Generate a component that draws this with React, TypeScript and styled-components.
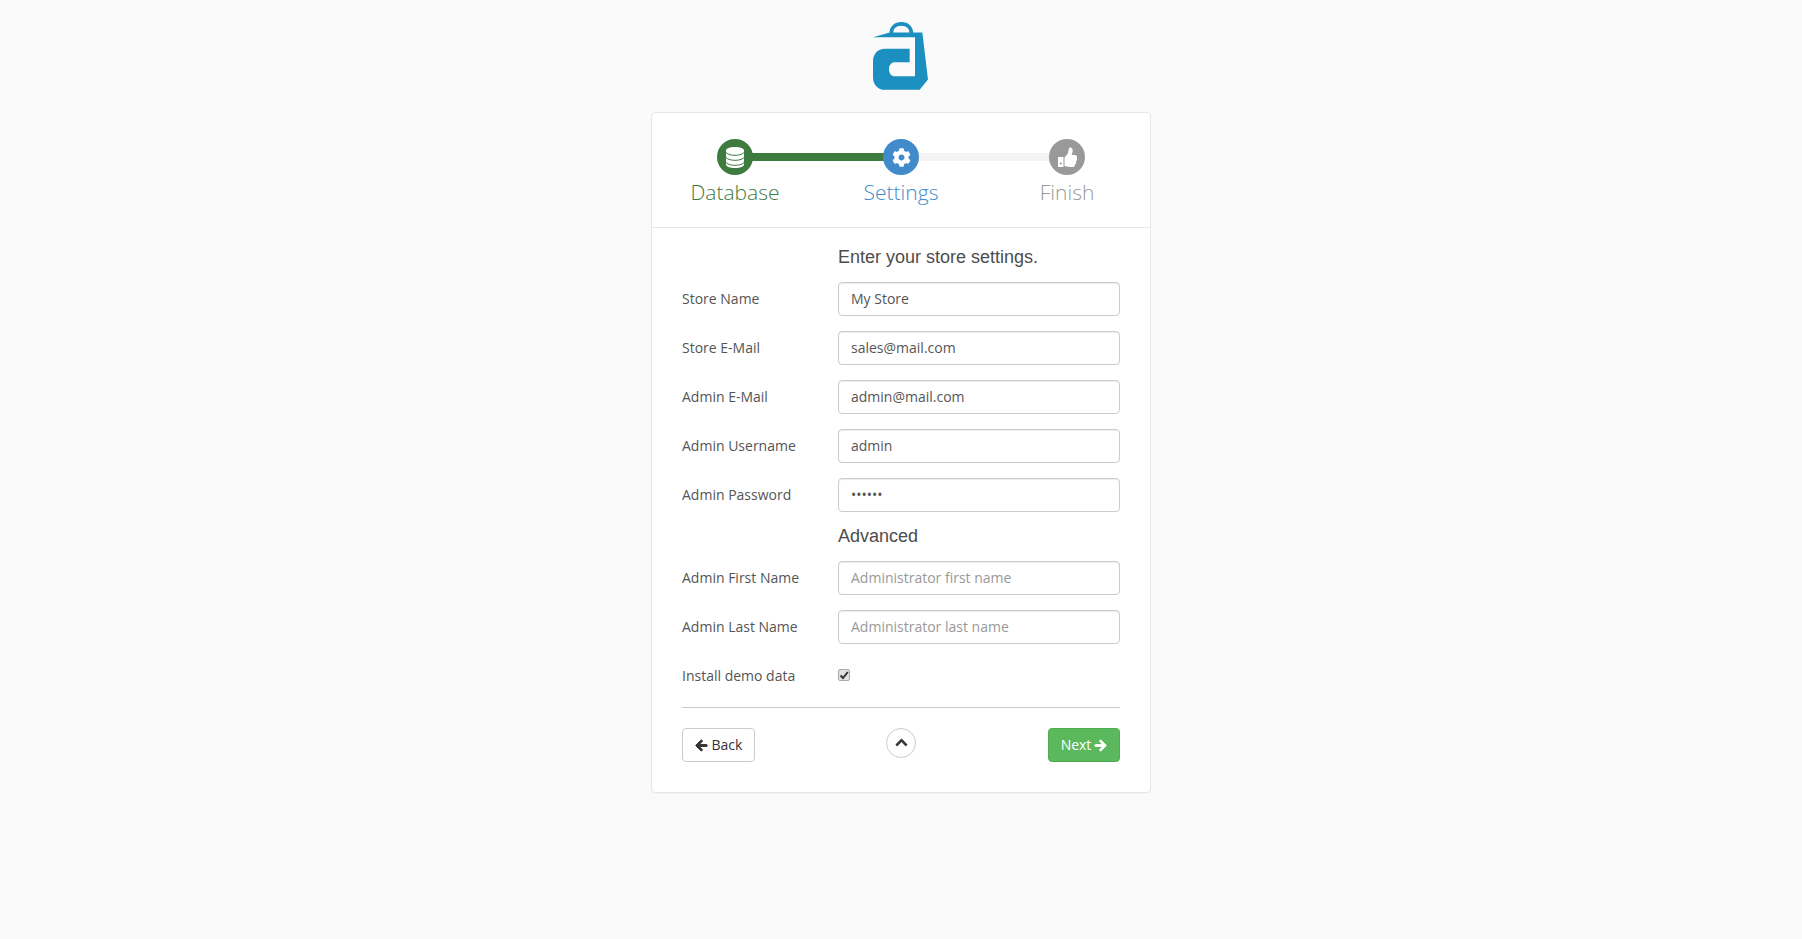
import React from "react";
import styled, { createGlobalStyle } from "styled-components";
import { FaCog, FaArrowLeft, FaArrowRight, FaChevronUp } from "react-icons/fa";

const Global = createGlobalStyle`
  html, body { margin: 0; padding: 0; }
  body {
    background: #fafafa;
    font-family: "Open Sans", "Liberation Sans", sans-serif;
    font-size: 14px;
    line-height: 20px;
    color: #555;
  }
  * { box-sizing: border-box; }
`;

const Page = styled.div`
  display: flex;
  flex-direction: column;
  align-items: center;
  padding-top: 22px;
  min-height: 939px;
`;
const Logo = styled.svg`
  display: block;
  width: 55px;
  height: 68px;
  margin: 0 1px 22px 0;
`;
const Card = styled.main`
  width: 500px;
  background: #fff;
  border: 1px solid #e7e7e7;
  border-radius: 4px;
  box-shadow: 0 1px 1px rgba(0, 0, 0, 0.03);
`;
const Steps = styled.div`
  display: grid;
  grid-template-columns: repeat(3, 1fr);
  height: 115px;
  padding-top: 26px;
  border-bottom: 1px solid #e7e7e7;
`;
const Step = styled.div<{ $color: string; $bar?: string }>`
  position: relative;
  display: flex;
  flex-direction: column;
  align-items: center;
  color: ${(p) => p.$color};
  &::after {
    content: ${(p) => (p.$bar ? '""' : "none")};
    position: absolute;
    top: 14px;
    left: 50%;
    width: 100%;
    height: 8px;
    background: ${(p) => p.$bar};
  }
`;
const Circle = styled.div<{ $bg: string; $icon: number }>`
  position: relative;
  z-index: 1;
  display: flex;
  align-items: center;
  justify-content: center;
  width: 36px;
  height: 36px;
  border-radius: 50%;
  background: ${(p) => p.$bg};
  color: #fff;
  font-size: ${(p) => p.$icon}px;
`;
const DbIcon = styled.svg`
  display: block;
  width: 18px;
  height: 21px;
`;
const ThumbIcon = styled.svg`
  display: block;
  width: 19px;
  height: 20px;
`;
const StepLabel = styled.div`
  margin-top: 3px;
  font-size: 21px;
  line-height: 29px;
  font-weight: 300;
`;
const Form = styled.form`
  padding: 19px 30px 30px;
`;
const Row = styled.div`
  display: grid;
  grid-template-columns: 156px 282px;
  align-items: center;
  min-height: 34px;
  margin-bottom: 15px;
`;
const Heading = styled.h4<{ $before?: number; $after: number }>`
  margin: ${(p) => p.$before ?? 0}px 0 ${(p) => p.$after}px 156px;
  font-family: "Liberation Sans", Arial, sans-serif;
  font-size: 18px;
  line-height: 20px;
  font-weight: 400;
  color: #4d4d4d;
`;
const Label = styled.label`
  color: #555;
`;
const Input = styled.input`
  width: 282px;
  height: 34px;
  padding: 5px 12px 7px;
  font: inherit;
  color: #555;
  background: #fff;
  border: 1px solid #ccc;
  border-radius: 4px;
  box-shadow: inset 0 1px 1px rgba(0, 0, 0, 0.075);
  &::placeholder { color: #999; opacity: 1; }
`;
const Check = styled.input`
  appearance: none;
  display: block;
  width: 12px;
  height: 12px;
  margin: 0 0 2px;
  border: 1px solid #aaa;
  border-radius: 2px;
  background: #e0e0e0 url("data:image/svg+xml,%3Csvg xmlns='http://www.w3.org/2000/svg' viewBox='0 0 10 10'%3E%3Cpath d='M1.5 5.5 4 8l4.8-6' fill='none' stroke='%23333' stroke-width='2'/%3E%3C/svg%3E") center / 10px 10px no-repeat;
`;
const CheckRow = styled(Row)`
  height: 34px;
  margin-bottom: 14px;
`;
const Rule = styled.hr`
  margin: 0 0 20px;
  border: 0;
  height: 1px;
  background: #ccc;
`;
const Footer = styled.div`
  display: grid;
  grid-template-columns: 1fr auto 1fr;
  align-items: start;
`;
const Button = styled.button<{ $primary?: boolean; $width: number }>`
  display: inline-flex;
  align-items: center;
  justify-content: center;
  gap: ${(p) => (p.$primary ? 3 : 4)}px;
  width: ${(p) => p.$width}px;
  height: 34px;
  padding: 0;
  font: inherit;
  color: ${(p) => (p.$primary ? "#fff" : "#333")};
  background: ${(p) => (p.$primary ? "#5cb85c" : "#fff")};
  border: 1px solid ${(p) => (p.$primary ? "#4cae4c" : "#ccc")};
  border-radius: 4px;
  justify-self: ${(p) => (p.$primary ? "end" : "start")};
  svg {
    font-size: 13px;
    stroke: currentColor;
    stroke-width: 36;
  }
`;
const Round = styled.button`
  display: flex;
  align-items: center;
  justify-content: center;
  width: 30px;
  height: 30px;
  padding: 0 0 2px;
  color: #333;
  background: #fff;
  border: 1px solid #ccc;
  border-radius: 50%;
  font-size: 13px;
  svg {
    stroke: currentColor;
    stroke-width: 30;
  }
`;

const fields = [
  ["Store Name", "text", "My Store"],
  ["Store E-Mail", "text", "sales@mail.com"],
  ["Admin E-Mail", "text", "admin@mail.com"],
  ["Admin Username", "text", "admin"],
  ["Admin Password", "password", "secret"],
];

export default function App() {
  return (
    <Page>
      <Global />
      <Logo viewBox="100 35 165 203" aria-label="logo">
        <path
          fill="#1a8fc0"
          d="M100 80 150 66H248L265 207 240 238H136C114 238 100 222 100 200V153C100 131 114 115 136 115H210V155H166C155 155 148 163 148 176S155 197 166 197H226V80Z"
        />
        <path fill="none" stroke="#1a8fc0" strokeWidth="11" d="M155 68C155 50 168 40 185 40S215 50 215 68" />
      </Logo>
      <Card>
        <Steps>
          <Step $color="#3e7b3e" $bar="#3e7b3e">
            <Circle $bg="#3e7b3e" $icon={21}>
              <DbIcon viewBox="0 0 18 21">
                <path fill="#fff" d="M0 3.500C0 1.200 4 0 9 0S18 1.200 18 3.500V17.500C18 19.800 14 21 9 21S0 19.800 0 17.500Z" />
                <path
                  fill="none"
                  stroke="#3e7b3e"
                  strokeWidth="1"
                  d="M0 5.500C2 7.800 6 8.300 9 8.300S16 7.800 18 5.500M0 10.500C2 12.800 6 13.300 9 13.300S16 12.800 18 10.500M0 15.500C2 17.800 6 18.300 9 18.300S16 17.800 18 15.500"
                />
              </DbIcon>
            </Circle>
            <StepLabel>Database</StepLabel>
          </Step>
          <Step $color="#428bca" $bar="#f3f3f3">
            <Circle $bg="#428bca" $icon={19}><FaCog /></Circle>
            <StepLabel>Settings</StepLabel>
          </Step>
          <Step $color="#999">
            <Circle $bg="#999" $icon={20}>
              <ThumbIcon viewBox="0 0 19 20">
                <path fill="#fff" d="M0 10H5.500V20H0ZM2.700 15.600a1 1 0 1 0 .1 2 1 1 0 0 0-.1-2Z" fillRule="evenodd" />
                <path fill="#fff" d="M6.500 10.500 9.500 7C10.500 5 10.500 3 11 1 12 0 14 .3 14.600 2.500 15 5 14 6.500 13.500 8H17C18.800 8 19.500 10 18.800 11.200 19.500 12.500 19 13.700 18 14.300 18.500 15.600 18 16.800 17 17.300 17.200 19 16 20 14 20H11.500C9.500 20 8.500 19 6.500 19Z" />
              </ThumbIcon>
            </Circle>
            <StepLabel>Finish</StepLabel>
          </Step>
        </Steps>
        <Form>
          <Heading $after={15}>Enter your store settings.</Heading>
          {fields.map(([label, type, value]) => (
            <Row key={label}>
              <Label>{label}</Label>
              <Input type={type} defaultValue={value} />
            </Row>
          ))}
          <Heading $before={-1} $after={15}>Advanced</Heading>
          <Row>
            <Label>Admin First Name</Label>
            <Input placeholder="Administrator first name" />
          </Row>
          <Row>
            <Label>Admin Last Name</Label>
            <Input placeholder="Administrator last name" />
          </Row>
          <CheckRow>
            <Label>Install demo data</Label>
            <Check type="checkbox" defaultChecked />
          </CheckRow>
          <Rule />
          <Footer>
            <Button type="button" $width={73}><FaArrowLeft /> Back</Button>
            <Round type="button" aria-label="Up"><FaChevronUp /></Round>
            <Button type="button" $primary $width={72}>Next <FaArrowRight /></Button>
          </Footer>
        </Form>
      </Card>
    </Page>
  );
}
